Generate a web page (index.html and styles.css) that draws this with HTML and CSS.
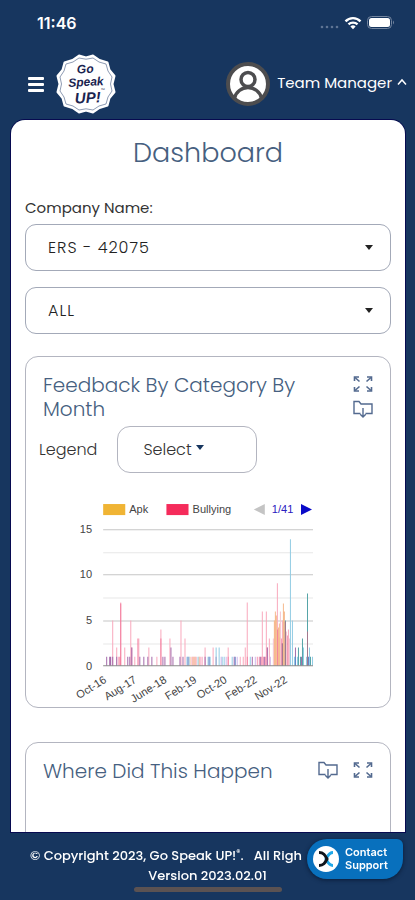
FILE: index.html
```html
<!DOCTYPE html>
<html lang="en">
<head>
<meta charset="utf-8">
<meta name="viewport" content="width=device-width, initial-scale=1">
<title>Dashboard</title>
<link rel="stylesheet" href="styles.css">
</head>
<body>
<svg class="sprite" aria-hidden="true">
  <symbol id="expand" viewBox="0 0 20 18">
    <g fill="none" stroke="currentColor" stroke-width="1.6">
      <path d="M1.500 6V2H6M14 2h4.500V6M1.500 12v4H6M14 16h4.500v-4"/>
      <path d="M2 2.500l4.500 4M18 2.500l-4.500 4M2 15.500l4.500-4M18 15.500l-4.500-4"/>
    </g>
  </symbol>
  <symbol id="save" viewBox="0 0 20 18">
    <g fill="none" stroke="currentColor" stroke-width="1.400">
      <path d="M7.500 13.500H1V1.500h5l2 2.500h11v9.500h-6.500"/>
      <path d="M10 8v9M7.200 14.200L10 17l2.800-2.800"/>
    </g>
  </symbol>
</svg>

<div class="status">
  <time>11:46</time>
  <svg width="76" height="16" viewBox="0 0 76 16" role="img" aria-label="Wi-Fi on, battery full">
    <g fill="#5f7594"><circle cx="3" cy="12" r="1.300"/><circle cx="8" cy="12" r="1.300"/><circle cx="13" cy="12" r="1.300"/><circle cx="18" cy="12" r="1.300"/></g>
    <g fill="none" stroke="#fff" stroke-width="2.400"><path d="M26.500 6.300a10.500 10.500 0 0 1 15 0"/><path d="M29.500 9.400a6.500 6.500 0 0 1 9 0"/></g>
    <path d="M34 14.200l-2.600-2.800a4 4 0 0 1 5.200 0z" fill="#fff"/>
    <rect x="48.500" y="1.500" width="24" height="12" rx="4" fill="none" stroke="#73859f"/>
    <rect x="50" y="3" width="21" height="9" rx="2.500" fill="#fff"/>
    <path d="M74 5.500q2 2 0 4z" fill="#73859f"/>
  </svg>
</div>

<header class="header">
  <button class="menu" type="button" aria-label="Menu"><span></span><span></span><span></span></button>
  <a class="logo" href="#" aria-label="Go Speak UP!">
    <svg width="60" height="60" viewBox="0 0 60 60">
      <path fill="#fff" stroke="#fff" stroke-width="2" stroke-linejoin="round" d="M30 3.500L37 1.500L43.500 6L51.500 8.500L53.500 16L58.500 22L56.500 30L58.500 38L53.500 44L51.500 51.500L43.500 54L37 58.500L30 56.500L23 58.500L16.500 54L8.500 51.500L6.500 44L1.500 38L3.500 30L1.500 22L6.500 16L8.500 8.500L16.500 6L23 1.500Z"/>
      <path fill="none" stroke="#7181a0" stroke-width=".8" d="M30 5.200L37 4L43 8L50 10L52 17L56 23L54.500 30L56 37L52 43L50 50L43 52L37 56L30 54.800L23 56L17 52L10 50L8 43L4 37L5.500 30L4 23L8 17L10 10L17 8L23 4Z"/>
      <g class="logo-text" text-anchor="middle" transform="rotate(-3 30 30)">
        <text x="30" y="19">Go</text><text x="30" y="32">Speak</text><text class="logo-up" x="31" y="49">UP!</text>
      </g>
      <text class="logo-tm" x="45" y="38">™</text>
    </svg>
  </a>
  <button class="user" type="button">
    <svg width="44" height="44" viewBox="0 0 44 44" aria-hidden="true">
      <circle cx="22" cy="22" r="20" fill="#fff" stroke="#4d4d4f" stroke-width="4"/>
      <g fill="none" stroke="#4d4d4f" stroke-width="3.500"><circle cx="22" cy="17.500" r="7"/><path d="M8.500 36c1.500-6 7-10.500 13.500-10.500S34 30 35.500 36"/></g>
    </svg>
    <span class="user-name">Team Manager
      <svg width="10" height="8" viewBox="0 0 10 8" aria-hidden="true"><path d="M1 6.500L5 2l4 4.500" fill="none" stroke="#fff" stroke-width="1.500"/></svg>
    </span>
  </button>
</header>

<main class="main">
  <h1>Dashboard</h1>
  <label class="label" for="company">Company Name:</label>
  <div class="select"><select id="company"><option>ERS - 42075</option></select></div>
  <div class="select"><select aria-label="Location"><option>ALL</option></select></div>

  <section class="card">
    <div class="card-head">
      <h2>Feedback By Category By Month</h2>
      <div class="tools tools-stacked">
        <button type="button" aria-label="Expand"><svg><use href="#expand"/></svg></button>
        <button type="button" aria-label="Download"><svg><use href="#save"/></svg></button>
      </div>
    </div>
    <div class="legend">
      <span>Legend</span>
      <button class="picker" type="button" aria-haspopup="listbox">Select</button>
    </div>
    <svg class="chart" viewBox="0 0 290 210" role="img" aria-label="Feedback by category by month">
      <rect x="41" y="9" width="22" height="11" fill="#f0b434"/><text x="67" y="18">Apk</text>
      <rect x="104" y="9" width="22" height="11" fill="#f52b5b"/><text x="130" y="18">Bullying</text>
      <path d="M202 9v11l-11-5.500z" fill="#c4c4c4"/><text x="209" y="18" class="page">1/41</text><path d="M238 9v11l11-5.500z" fill="#0a0ac8"/>
      <g text-anchor="end"><text x="30" y="38">15</text><text x="30" y="83">10</text><text x="30" y="128">5</text><text x="30" y="174">0</text></g>
      <path d="M41 34.500h209M41 79.500h209M41 125.500h209" stroke="#c6c6c6"/>
      <path d="M41 57.500h209M41 102.500h209M41 148.500h209" stroke="#e8e8e8"/>
      <g transform="translate(41 170)" fill="none">
        <path stroke="#f9a9bd" d="M9.500 0v-45M13.500 0v-18M17.500 0v-63M21.500 0v-18M27.500 0v-45M35.500 0v-27M45.500 0v-18M53.500 0v-9M57.500 0v-36M66.500 0v-27M77.500 0v-45M81.500 0v-27M101.500 0v-18M109.500 0v-18M124.500 0v-18M141.500 0v-18M143.500 0v-63M158.500 0v-54M162.500 0v-54M165.500 0v-27M173.500 0v-82M178.500 0v-45M184.500 0v-36M15.500 0v-9M16.500 0v-9M31.500 0v-9M136.500 0v-9M139.500 0v-9"/>
        <path stroke="#f0527e" opacity=".6" d="M17.500 0v-62M28.500 0v-18M34.500 0v-27M57.500 0v-27M143.500 0v-9M163.500 0v-18M173.500 0v-36M177.500 0v-27M183.500 0v-30M88.500 0v-9M90.500 0v-9M92.500 0v-9M96.500 0v-9M98.500 0v-9M124.500 0v-9M153.500 0v-9M155.500 0v-9M157.500 0v-9M159.500 0v-9M161.500 0v-9"/>
        <path stroke="#a56bab" d="M3.500 0v-9M6.500 0v-9M7.500 0v-9M9.500 0v-9M13.500 0v-9M24.500 0v-9M26.500 0v-9M28.500 0v-18M36.500 0v-9M40.500 0v-9M44.500 0v-9M48.500 0v-9M59.500 0v-9M61.500 0v-9M67.500 0v-18M69.500 0v-9M76.500 0v-9M79.500 0v-9M101.500 0v-9M112.500 0v-9M130.500 0v-9M148.500 0v-9M156.500 0v-9M160.500 0v-9M163.500 0v-18M178.500 0v-22M191.500 0v-18M197.500 0v-9"/>
        <path stroke="#f6ba8e" d="M86.500 0v-9M89.500 0v-9M91.500 0v-9M95.500 0v-9M170.500 0v-45M171.500 0v-54M172.500 0v-50M174.500 0v-38M175.500 0v-42M176.500 0v-28M179.500 0v-62M180.500 0v-54"/>
        <path stroke="#f5c4ce" d="M169.500 0v-27M176.500 0v-54M182.500 0v-34M185.500 0v-27"/>
        <path stroke="#92cce4" d="M83.500 0v-9M85.500 0v-9M94.500 0v-9M104.500 0v-9M106.500 0v-9M112.500 0v-18M115.500 0v-18M118.500 0v-9M120.500 0v-9M128.500 0v-9M146.500 0v-9M186.500 0v-126M188.500 0v-45M190.500 0v-9M193.500 0v-9M199.500 0v-18M202.500 0v-9M205.500 0v-18M208.500 0v-9"/>
        <path stroke="#d0b7ea" d="M117.500 0v-9M122.500 0v-9M133.500 0v-9M151.500 0v-9M166.500 0v-9"/>
        <path stroke="#6484c8" d="M84.500 0v-9M105.500 0v-9M131.500 0v-9M191.500 0v-9M204.500 0v-9"/>
        <path stroke="#56a5a8" d="M181.500 0v-45M194.500 0v-18M196.500 0v-9M198.500 0v-27M203.500 0v-72M206.500 0v-9"/>
        <path stroke="#a3788d" d="M181.500 0v-44M178.500 0v-22M203.500 0v-34"/>
      </g>
      <path d="M41 170h209" stroke="#8a8a8a"/>
      <g text-anchor="end">
        <text transform="translate(45 186) rotate(-32)">Oct-16</text>
        <text transform="translate(75 186) rotate(-32)">Aug-17</text>
        <text transform="translate(105 186) rotate(-32)">June-18</text>
        <text transform="translate(135 186) rotate(-32)">Feb-19</text>
        <text transform="translate(165 186) rotate(-32)">Oct-20</text>
        <text transform="translate(195 186) rotate(-32)">Feb-22</text>
        <text transform="translate(225 186) rotate(-32)">Nov-22</text>
      </g>
    </svg>
  </section>

  <section class="card card-where">
    <div class="card-head">
      <h2>Where Did This Happen</h2>
      <div class="tools">
        <button type="button" aria-label="Download"><svg><use href="#save"/></svg></button>
        <button type="button" aria-label="Expand"><svg><use href="#expand"/></svg></button>
      </div>
    </div>
  </section>
</main>

<footer class="footer">
  <p class="copyright">© Copyright 2023, Go Speak UP!<sup>®</sup>. &nbsp; All Righ</p>
  <p>Version 2023.02.01</p>
  <div class="home-bar"></div>
</footer>

<button class="support" type="button">
  <svg width="26" height="26" viewBox="0 0 26 26" aria-hidden="true">
    <circle cx="13" cy="13" r="13" fill="#fff"/>
    <path d="M20 6.500c-4 0-5 3-7 6.500 2 3.500 3 6.500 7 6.500" fill="none" stroke="#20a8e8" stroke-width="3"/>
    <path d="M6 6.500c4.500 0 6 2.500 8 6.500-2 4-3.500 6.500-8 6.500" fill="none" stroke="#10151c" stroke-width="3"/>
  </svg>
  <span>Contact<br>Support</span>
</button>
</body>
</html>
```
FILE: styles.css
```css
* { box-sizing: border-box; }

body {
  margin: 0;
  height: 100vh;
  display: flex;
  flex-direction: column;
  background: #17365f;
  color: #333;
  font-family: Poppins, Inter, sans-serif;
  font-size: 16px;
  font-weight: 300;
}

button {
  padding: 0;
  border: 0;
  background: none;
  color: inherit;
  font: inherit;
}

h1, h2, p { margin: 0; }

.sprite { position: absolute; width: 0; height: 0; }

.status {
  flex: none;
  display: flex;
  justify-content: space-between;
  align-items: center;
  height: 46px;
  padding: 0 20px 0 37px;
  color: #fff;
  font-family: Inter, sans-serif;
  font-weight: 600;
}

.header {
  flex: none;
  display: flex;
  align-items: center;
  height: 74px;
  padding: 2px 8px 0 28px;
}

.menu { display: grid; gap: 3px; width: 16px; margin-right: 12px; }
.menu span { height: 3px; border-radius: 1px; background: #fff; }

.logo svg { display: block; }
.logo-text {
  fill: #1b2450;
  font-family: "Liberation Sans", sans-serif;
  font-size: 12px;
  font-style: italic;
  font-weight: 700;
}
.logo-up { font-size: 15px; }
.logo-tm { fill: #1b2450; font-size: 5px; }

.user {
  display: flex;
  align-items: center;
  gap: 7px;
  margin-left: auto;
  color: #fff;
  font-size: 15px;
  font-weight: 400;
}

.user-name {
  display: flex;
  align-items: center;
  gap: 5px;
  padding-bottom: 4px;
}

.main {
  flex: 1;
  min-height: 0;
  overflow-y: auto;
  scrollbar-width: none;
  margin: 0 10px 0 11px;
  padding: 14px 14px 0;
  border-radius: 14px 14px 0 0;
  background: #fff;
  box-shadow: 0 0 0 1px #070a50;
}

h1 {
  color: #466080;
  font-size: 27px;
  font-weight: 300;
  line-height: 38px;
  text-align: center;
}

.label {
  display: block;
  margin: 26px 0 6px;
  font-size: 15px;
  font-weight: 400;
  line-height: 20px;
}

.select { position: relative; margin-bottom: 16px; }
.select::after {
  content: "";
  position: absolute;
  top: 21px;
  right: 18px;
  border: 4px solid transparent;
  border-top: 5px solid #222;
  border-bottom: 0;
  pointer-events: none;
}
.select select {
  display: block;
  appearance: none;
  width: 100%;
  height: 47px;
  padding: 0 40px 0 22px;
  border: 1px solid #a3a9b8;
  border-radius: 11px;
  background: #fff;
  color: #222;
  font: inherit;
  letter-spacing: 1px;
}

.card {
  margin-top: 22px;
  border: 1px solid #b3b5c0;
  border-radius: 13px;
}

.card-head {
  display: flex;
  justify-content: space-between;
  padding: 16px 17px 0;
}

h2 {
  max-width: 270px;
  color: #466080;
  font-size: 20px;
  font-weight: 300;
  line-height: 24px;
}

.tools { display: flex; gap: 15px; padding-top: 2px; color: #536a8f; }
.tools-stacked { flex-direction: column; gap: 7px; }
.tools button, .tools svg { display: block; width: 20px; height: 18px; }

.legend {
  display: flex;
  align-items: center;
  gap: 20px;
  padding: 5px 13px 0;
}

.picker {
  display: flex;
  align-items: center;
  gap: 4px;
  width: 140px;
  height: 47px;
  padding-left: 25px;
  border: 1px solid #b3b5c0;
  border-radius: 13px;
}
.picker::after {
  content: "";
  margin-bottom: 4px;
  border: 4px solid transparent;
  border-top: 5px solid #17365f;
  border-bottom: 0;
}

.chart {
  display: block;
  width: 80%;
  margin: 22px auto 0;
  padding-bottom: 1px;
  fill: #444;
  font-family: "Liberation Sans", sans-serif;
  font-size: 11px;
  font-weight: 400;
}
.chart .page { fill: #2a20c0; }

.card-where { margin-top: 34px; height: 320px; }

.footer {
  flex: none;
  height: 68px;
  padding-top: 14px;
  color: #fff;
  font-size: 13px;
  font-weight: 500;
  line-height: 20px;
  text-align: center;
}
.footer .copyright {
  margin-left: 30px;
  text-align: left;
  white-space: nowrap;
}
.footer sup { font-size: 8px; line-height: 1px; }

.home-bar {
  width: 148px;
  height: 5px;
  margin: 1px auto 0;
  border-radius: 3px;
  background: #5b5252;
}

.support {
  position: fixed;
  right: 12px;
  bottom: 21px;
  display: flex;
  align-items: center;
  gap: 6px;
  width: 96px;
  height: 40px;
  padding-left: 6px;
  border-radius: 20px 6px 20px 20px;
  background: #0870bd;
  box-shadow: 0 1px 4px #0a1c38;
  color: #fff;
  font-family: Inter, sans-serif;
  font-size: 11px;
  font-weight: 600;
  line-height: 13px;
  text-align: left;
}
```
